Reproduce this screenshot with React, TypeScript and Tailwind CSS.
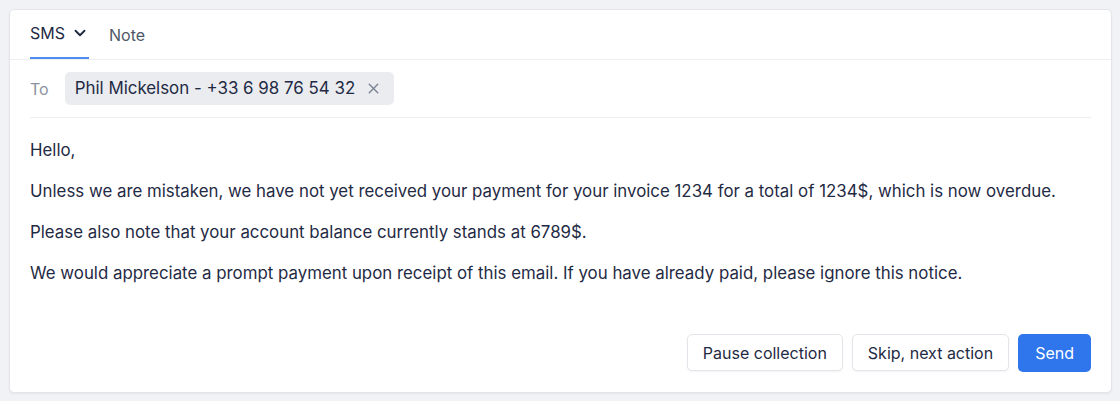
import { ChevronDown, X } from 'lucide-react';

export default function App() {
  return (
    <div className="min-h-[401px] w-[1120px] bg-[#f1f2f5] py-[9px] pl-[9px] pr-[8px] font-['Inter',sans-serif] text-[#1f2a44]">
      <div className="rounded-[5px] border border-[#e3e5ea] bg-white shadow-[0_1px_2px_rgba(16,24,40,0.06)]">
        {/* Tabs */}
        <div className="flex items-end gap-[20px] border-b border-[#eceef1] px-[20px] pt-[12px]">
          <button className="flex items-center gap-[6px] border-b-2 border-[#4f8cf0] pb-[13px] text-[16px] leading-[22px] text-[#1f2a44]">
            SMS
            <ChevronDown className="h-[18px] w-[18px]" strokeWidth={2.5} />
          </button>
          <button className="pb-[13px] text-[16px] leading-[22px] text-[#4f5867]">Note</button>
        </div>

        <div className="px-[20px]">
          {/* Recipient */}
          <div className="flex items-center gap-[16px] border-b border-[#eceef1] py-[12px]">
            <span className="text-[16px] text-[#8b93a1]">To</span>
            <div className="flex h-[33px] items-center gap-[10px] rounded-[5px] bg-[#eaecf0] pl-[10px] pr-[12px]">
              <span className="text-[16.9px] text-[#1f2a44]">Phil Mickelson - +33 6 98 76 54 32</span>
              <X className="h-[17px] w-[17px] text-[#7c8493]" strokeWidth={2} />
            </div>
          </div>

          {/* Message */}
          <div className="flex flex-col gap-[17px] pt-[20px] text-[16.85px] leading-[24px]">
            <p>Hello,</p>
            <p>Unless we are mistaken, we have not yet received your payment for your invoice 1234 for a total of 1234$, which is now overdue.</p>
            <p>Please also note that your account balance currently stands at 6789$.</p>
            <p>We would appreciate a prompt payment upon receipt of this email. If you have already paid, please ignore this notice.</p>
          </div>

          {/* Actions */}
          <div className="flex justify-end gap-[9px] pb-[20px] pt-[49px]">
            <button className="h-[37px] rounded-[5px] border border-[#e3e5ea] bg-white px-[15px] text-[16px] text-[#1f2a44] shadow-[0_1px_2px_rgba(16,24,40,0.05)]">
              Pause collection
            </button>
            <button className="h-[37px] rounded-[5px] border border-[#e3e5ea] bg-white px-[15px] text-[16px] text-[#1f2a44] shadow-[0_1px_2px_rgba(16,24,40,0.05)]">
              Skip, next action
            </button>
            <button className="h-[38px] rounded-[5px] bg-[#2f76ec] px-[17px] text-[16px] text-white">
              Send
            </button>
          </div>
        </div>
      </div>
    </div>
  );
}
